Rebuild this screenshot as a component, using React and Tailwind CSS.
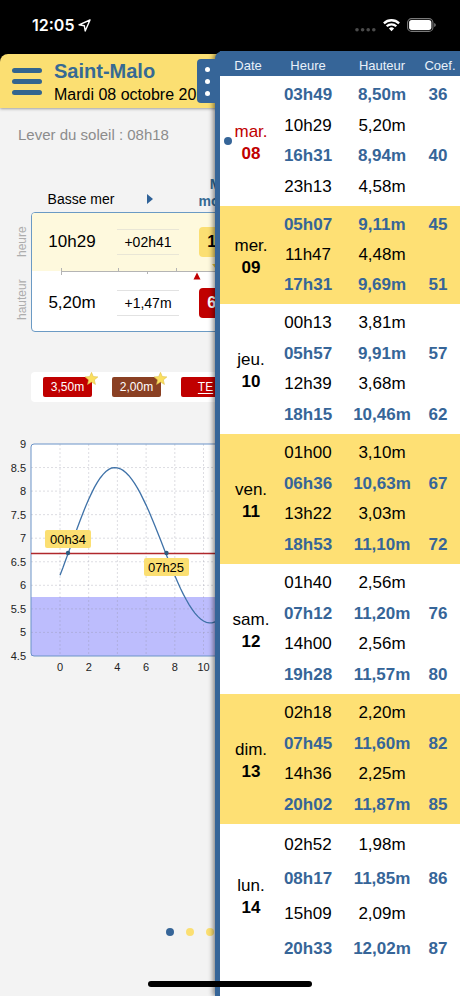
import React, { useState } from "react";

const days = [
  { name: "mar.", num: "08", today: true, tides: [["03h49", "8,50m", "36"], ["10h29", "5,20m", ""], ["16h31", "8,94m", "40"], ["23h13", "4,58m", ""]] },
  { name: "mer.", num: "09", tides: [["05h07", "9,11m", "45"], ["11h47", "4,48m", ""], ["17h31", "9,69m", "51"]] },
  { name: "jeu.", num: "10", tides: [["00h13", "3,81m", ""], ["05h57", "9,91m", "57"], ["12h39", "3,68m", ""], ["18h15", "10,46m", "62"]] },
  { name: "ven.", num: "11", tides: [["01h00", "3,10m", ""], ["06h36", "10,63m", "67"], ["13h22", "3,03m", ""], ["18h53", "11,10m", "72"]] },
  { name: "sam.", num: "12", tides: [["01h40", "2,56m", ""], ["07h12", "11,20m", "76"], ["14h00", "2,56m", ""], ["19h28", "11,57m", "80"]] },
  { name: "dim.", num: "13", tides: [["02h18", "2,20m", ""], ["07h45", "11,60m", "82"], ["14h36", "2,25m", ""], ["20h02", "11,87m", "85"]] },
  { name: "lun.", num: "14", tides: [["02h52", "1,98m", ""], ["08h17", "11,85m", "86"], ["15h09", "2,09m", ""], ["20h33", "12,02m", "87"]] },
];

const rowClass = (day, i) => {
  const last = day.tides.length - 1;
  if (day.num === "14") {
    return i === 0 ? "h-[37px] [&>td]:pt-1" : "h-[35px]";
  }
  if (i === 0) return "h-[34px] [&>td]:pt-1";
  if (i === last) return "h-[35px] [&>td]:pb-1";
  if (last === 2) return "h-[29px]";
  return i === 1 ? "h-[31px]" : "h-[30px]";
};

const StatusBar = () => (
  <div className="flex h-[54px] items-center justify-between bg-black pb-1 pl-8 pr-6 text-white">
    <div className="flex items-center gap-1">
      <span className="font-['Inter',sans-serif] text-base font-semibold leading-5">12:05</span>
      <svg width="13" height="13" viewBox="0 0 13 13" fill="none" stroke="white" strokeWidth="1.4" strokeLinejoin="round">
        <path d="M12 1 L1 5.8 L6.3 6.7 L7.2 12 Z" />
      </svg>
    </div>
    <div className="flex items-center gap-[7px]">
      <svg width="21" height="14" viewBox="0 0 21 14" fill="#4b4b4b">
        <circle cx="2" cy="11.7" r="1.8" />
        <circle cx="7.6" cy="11.7" r="1.8" />
        <circle cx="13.2" cy="11.7" r="1.8" />
        <circle cx="18.8" cy="11.7" r="1.8" />
      </svg>
      <svg width="17" height="14" viewBox="0 0 17 14" fill="none" stroke="white" strokeWidth="2.3">
        <path d="M0.9 5.4 A10.8 10.8 0 0 1 16.1 5.4" />
        <path d="M3.7 8.3 A6.8 6.8 0 0 1 13.3 8.3" />
        <path d="M8.5 13.2 L5.9 10.5 A3.7 3.7 0 0 1 11.1 10.5 Z" fill="white" stroke="none" />
      </svg>
      <svg width="29" height="14" viewBox="0 0 29 14">
        <rect x="0.6" y="0.6" width="25.3" height="12.8" rx="4" fill="none" stroke="#7a7a7a" strokeWidth="1.1" />
        <rect x="2.1" y="2.1" width="22.3" height="9.8" rx="2.6" fill="white" />
        <path d="M27.2 5 Q28.8 5.6 28.8 7 Q28.8 8.4 27.2 9 Z" fill="#7a7a7a" />
      </svg>
    </div>
  </div>
);

const Header = () => (
  <div className="bg-black">
    <header className="flex h-[54px] items-center rounded-tl-lg bg-[#fbdf72] pl-3 shadow-[0_1px_3px_rgba(0,0,0,0.35)]">
      <button aria-label="Menu" className="flex w-[30px] flex-col gap-[6px]">
        <span className="h-[5px] rounded-full bg-[#33658f]"></span>
        <span className="h-[5px] rounded-full bg-[#33658f]"></span>
        <span className="h-[5px] rounded-full bg-[#33658f]"></span>
      </button>
      <div className="ml-3 mt-1">
        <h1 className="text-xl font-bold leading-6 text-[#366a94]">Saint-Malo</h1>
        <p className="text-base leading-6 text-black">Mardi 08 octobre 2019</p>
      </div>
    </header>
  </div>
);

const columns = "grid grid-cols-[80px_72px_1fr_72px_80px] items-center justify-items-center";

const Arrow = () => (
  <svg width="6" height="10" viewBox="0 0 6 10" fill="#2f6298">
    <path d="M0 0 L6 5 L0 10 Z" />
  </svg>
);

const Current = () => (
  <section className="mt-7">
    <div className={`mx-[31px] h-[38px] text-sm text-black ${columns}`}>
      <span className="mt-3 whitespace-nowrap pl-5">Basse mer</span>
      <span className="mt-3 pl-1.5"><Arrow /></span>
      <span className="text-center font-bold leading-[17px] text-[#366a94]">Marée montante</span>
    </div>
    <div className="flex pr-[31px]">
      <div className="flex w-[31px] flex-col items-end pr-px text-xs text-[#adadad]">
        <span className="flex h-[60px] rotate-180 items-center justify-center [writing-mode:vertical-rl]">heure</span>
        <span className="flex h-[56px] rotate-180 items-center justify-center [writing-mode:vertical-rl]">hauteur</span>
      </div>
      <div className="relative flex-1 overflow-hidden rounded border border-[#6b9ac4] bg-white text-[17px] text-black">
        <div className={`h-[58px] bg-[#fef9dd] ${columns}`}>
          <span>10h29</span>
          <span className="w-[62px] border-y border-[#e9e6d6] text-center text-sm leading-6">+02h41</span>
          <span className="w-[62px] rounded-sm bg-[#fbdf72] text-center text-base font-bold leading-[30px]">13h10</span>
        </div>
        <div className={`h-[60px] pt-1 ${columns}`}>
          <span>5,20m</span>
          <span className="w-[62px] border-y border-[#e2e2e2] text-center text-sm leading-6">+1,47m</span>
          <span className="w-[62px] rounded-sm bg-[#c00000] text-center text-base font-bold leading-[30px] text-white">6,67m</span>
        </div>
        <svg className="absolute left-0 top-[50px]" width="396" height="18" viewBox="0 0 396 18">
          <path d="M29 8.5 H367 M29.5 5 V12 M86.5 5 V9 M115.5 8 V11 M144.5 5 V9" stroke="#b4b4b4" fill="none" />
          <path d="M165 9.5 L168.5 16.5 L161.5 16.5 Z" fill="#c00000" />
          <path d="M180 1 H188 L184 6 Z" fill="#e8c53a" />
        </svg>
      </div>
    </div>
  </section>
);

const Star = () => (
  <svg className="absolute -right-[6px] -top-[5px]" width="13" height="13" viewBox="0 0 24 24">
    <path d="M12 0.5 L15.3 8.3 L23.8 9 L17.3 14.6 L19.3 23 L12 18.5 L4.7 23 L6.7 14.6 L0.2 9 L8.7 8.3 Z" fill="#fbdf5f" stroke="#d9bd4d" strokeWidth="1" />
  </svg>
);

const Badges = () => (
  <section className="mx-[31px] mt-10 flex h-[30px] items-center gap-5 rounded-sm bg-white px-3 text-xs text-white">
    <button className="relative h-5 w-[49px] rounded-xs bg-[#c00000]">3,50m<Star /></button>
    <button className="relative h-5 w-[49px] rounded-xs bg-[#8a4023]">2,00m<Star /></button>
    <button className="h-5 w-[49px] rounded-xs bg-[#c00000] underline underline-offset-2">TE</button>
  </section>
);

// chart scale : hours -> x, metres -> y
const px = (t) => 52 + t * 14.35;
const py = (h) => 8 + (9 - h) * 47.1;

const extremes = [[-2.28, 5.2], [3.82, 8.5], [10.48, 5.2], [16.52, 8.94], [23.22, 4.58], [29.12, 9.11]];

const height = (t) => {
  const i = extremes.findIndex((e, k) => k < extremes.length - 1 && t >= e[0] && t <= extremes[k + 1][0]);
  const [t0, h0] = extremes[i];
  const [t1, h1] = extremes[i + 1];
  return (h0 + h1) / 2 + ((h0 - h1) / 2) * Math.cos((Math.PI * (t - t0)) / (t1 - t0));
};

const Chart = () => {
  const points = [];
  for (let t = 0; t <= 24; t += 0.2) {
    points.push(`${px(t).toFixed(1)},${py(height(t)).toFixed(1)}`);
  }
  const levels = [9, 8.5, 8, 7.5, 7, 6.5, 6, 5.5, 5, 4.5];
  const hours = [0, 2, 4, 6, 8, 10];
  return (
    <section className="ml-2 mt-[34px]">
      <svg width="426" height="240" viewBox="0 0 426 240" className="font-['Liberation_Sans',Arial,sans-serif]">
        <rect x="23" y="8" width="402" height="212" rx="3" fill="white" />
        <rect x="23" y="161" width="402" height="59" fill="#bdbdfd" />
        {levels.slice(1, -1).map((l) => (
          <line key={l} x1="23" x2="425" y1={py(l)} y2={py(l)} stroke="#8d8da0" strokeOpacity="0.3" strokeDasharray="2 2" />
        ))}
        {hours.map((t) => (
          <line key={t} x1={px(t)} x2={px(t)} y1="8" y2="220" stroke="#8d8da0" strokeOpacity="0.3" strokeDasharray="2 2" />
        ))}
        <rect x="23" y="8" width="402" height="212" rx="3" fill="none" stroke="#6b93c8" />
        <polyline points={points.join(" ")} fill="none" stroke="#3f72a8" strokeWidth="1.3" />
        <line x1="23" x2="425" y1="117.5" y2="117.5" stroke="#b0282c" strokeWidth="1.4" />
        <circle cx="60" cy="117" r="2.2" fill="#2f5c80" />
        <circle cx="158.5" cy="117" r="2.2" fill="#2f5c80" />
        <rect x="37" y="94" width="46" height="18" rx="2" fill="#fbdf72" />
        <text x="60" y="108" fontSize="13" textAnchor="middle">00h34</text>
        <rect x="136" y="122" width="45" height="18" rx="2" fill="#fbdf72" />
        <text x="158" y="136" fontSize="13" textAnchor="middle">07h25</text>
        {levels.map((l) => (
          <text key={l} x="18" y={py(l) + 4} fontSize="11" textAnchor="end" fill="#222">{l}</text>
        ))}
        {hours.map((t) => (
          <text key={t} x={px(t)} y="235" fontSize="11" textAnchor="middle" fill="#222">{t}</text>
        ))}
      </svg>
    </section>
  );
};

const Drawer = ({ open, onToggle }) => (
  <aside
    className={`absolute bottom-0 right-0 top-[51px] w-[245px] rounded-tl-lg border-l-[5px] border-[#366598] bg-white shadow-[-2px_0_5px_rgba(0,0,0,0.45)] ${open ? "" : "translate-x-[240px]"}`}
  >
    <button
      aria-label="Calendrier"
      onClick={onToggle}
      className="absolute -left-[23px] top-[8px] flex h-[44px] w-5 flex-col items-center justify-center gap-[7px] rounded-l bg-[#366598]"
    >
      <span className="h-[5px] w-[5px] rounded-full bg-white"></span>
      <span className="h-[5px] w-[5px] rounded-full bg-white"></span>
      <span className="h-[5px] w-[5px] rounded-full bg-white"></span>
    </button>
    <table className="w-full table-fixed border-collapse text-center text-[17px] leading-[22px] text-black">
      <colgroup>
        <col className="w-14" />
        <col className="w-16" />
        <col className="w-[84px]" />
        <col />
      </colgroup>
      <thead>
        <tr className="h-[25px] bg-[#366598] text-[13px] text-[#e9f1fa] [&>th]:pt-1 [&>th]:font-normal [&>th]:leading-5">
          <th>Date</th>
          <th>Heure</th>
          <th>Hauteur</th>
          <th className="pr-1">Coef.</th>
        </tr>
      </thead>
      {days.map((day, d) => (
        <tbody key={day.num} className={d % 2 === 1 ? "bg-[#fee074]" : "bg-white"}>
          {day.tides.map(([hour, level, coef], i) => (
            <tr key={hour} className={`${rowClass(day, i)} ${coef ? "font-bold text-[#366598]" : ""}`}>
              {i === 0 && (
                <td rowSpan={day.tides.length} className={`relative pl-1.5 ${day.today ? "text-[#c00000]" : "text-black"}`}>
                  {day.today && <span className="absolute left-1 top-[61px] h-2 w-2 rounded-full bg-[#366598]"></span>}
                  <div className="font-normal">{day.name}</div>
                  <div className="font-bold">{day.num}</div>
                </td>
              )}
              <td>{hour}</td>
              <td>{level}</td>
              <td className="pr-2">{coef}</td>
            </tr>
          ))}
        </tbody>
      ))}
    </table>
  </aside>
);

const App = () => {
  const [open, setOpen] = useState(true);

  return (
    <div className="relative flex min-h-screen flex-col overflow-hidden bg-[#f3f3f3] font-['Liberation_Sans',Arial,sans-serif]">
      <StatusBar />
      <Header />
      <p className="ml-[18px] mt-4 text-[15px] leading-[22px] text-[#8c8c8c]">Lever du soleil : 08h18</p>
      <Current />
      <Badges />
      <Chart />
      <div className="mb-[60px] mt-auto flex justify-center gap-3">
        <span className="h-2 w-2 rounded-full bg-[#366598]"></span>
        {[1, 2, 3, 4, 5, 6].map((n) => (
          <span key={n} className="h-2 w-2 rounded-full bg-[#fbdf72]"></span>
        ))}
      </div>
      <Drawer open={open} onToggle={() => setOpen(!open)} />
      <div className="absolute bottom-[9px] left-1/2 h-[6px] w-[164px] -translate-x-1/2 rounded-full bg-black"></div>
    </div>
  );
};

export default App;
